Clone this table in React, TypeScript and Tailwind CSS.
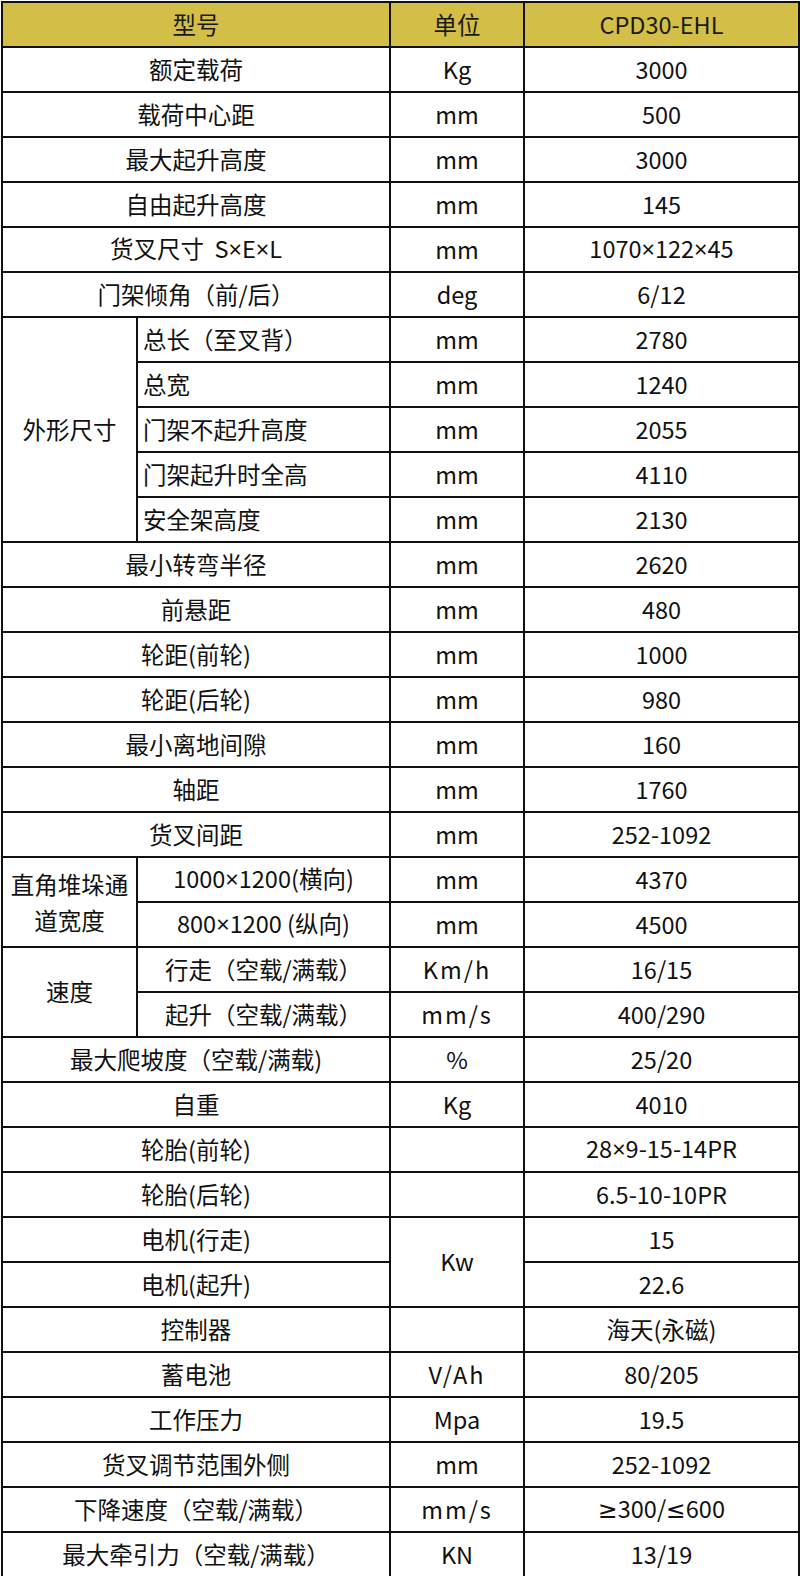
import { Fragment } from 'react'

const font = { fontFamily: '"Noto Sans CJK SC", "Noto Sans", sans-serif' }

type Row = {
  label: string
  unit?: string
  value: string
}

const top: Row[] = [
  { label: '额定载荷', unit: 'Kg', value: '3000' },
  { label: '载荷中心距', unit: 'mm', value: '500' },
  { label: '最大起升高度', unit: 'mm', value: '3000' },
  { label: '自由起升高度', unit: 'mm', value: '145' },
  { label: '货叉尺寸\u00a0 S×E×L', unit: 'mm', value: '1070×122×45' },
  { label: '门架倾角（前/后）', unit: 'deg', value: '6/12' },
]

const shape: Row[] = [
  { label: '总长（至叉背）', unit: 'mm', value: '2780' },
  { label: '总宽', unit: 'mm', value: '1240' },
  { label: '门架不起升高度', unit: 'mm', value: '2055' },
  { label: '门架起升时全高', unit: 'mm', value: '4110' },
  { label: '安全架高度', unit: 'mm', value: '2130' },
]

const middle: Row[] = [
  { label: '最小转弯半径', unit: 'mm', value: '2620' },
  { label: '前悬距', unit: 'mm', value: '480' },
  { label: '轮距(前轮)', unit: 'mm', value: '1000' },
  { label: '轮距(后轮)', unit: 'mm', value: '980' },
  { label: '最小离地间隙', unit: 'mm', value: '160' },
  { label: '轴距', unit: 'mm', value: '1760' },
  { label: '货叉间距', unit: 'mm', value: '252-1092' },
]

const lower: Row[] = [
  { label: '最大爬坡度（空载/满载)', unit: '%', value: '25/20' },
  { label: '自重', unit: 'Kg', value: '4010' },
  { label: '轮胎(前轮)', unit: '', value: '28×9-15-14PR' },
  { label: '轮胎(后轮)', unit: '', value: '6.5-10-10PR' },
]

const tail: Row[] = [
  { label: '控制器', unit: '', value: '海天(永磁)' },
  { label: '蓄电池', unit: 'V/Ah', value: '80/205' },
  { label: '工作压力', unit: 'Mpa', value: '19.5' },
  { label: '货叉调节范围外侧', unit: 'mm', value: '252-1092' },
  { label: '下降速度（空载/满载）', unit: 'mm/s', value: '≥300/≤600' },
  { label: '最大牵引力（空载/满载）', unit: 'KN', value: '13/19' },
]

const td = 'border-2 border-[#111] text-center align-middle p-0'

// × ≥ ≤ come out full width in the CJK face, the picture has the narrow Latin ones
function T({ s }: { s: string }) {
  const parts = s.split(/([×≥≤])/)
  return (
    <>
      {parts.map((p, i) =>
        /[×≥≤]/.test(p) ? (
          <span key={i} style={{ fontFamily: '"Noto Sans", "DejaVu Sans", sans-serif' }}>{p}</span>
        ) : (
          <Fragment key={i}>{p}</Fragment>
        )
      )}
    </>
  )
}

function Unit({ u }: { u?: string }) {
  const spaced = u === 'mm/s' || u === 'Km/h' || u === 'V/Ah'
  return <td className={td}><span className={spaced ? 'tracking-[2px]' : ''}>{u}</span></td>
}

function SimpleRow({ r }: { r: Row }) {
  return (
    <tr className="h-[45px]">
      <td colSpan={2} className={td}><T s={r.label} /></td>
      <Unit u={r.unit} />
      <td className={td}><T s={r.value} /></td>
    </tr>
  )
}

export default function App() {
  return (
    <div className="bg-white w-[800px] h-[1576px] overflow-hidden pl-[1px] pt-[1px]" style={font}>
      <table className="table-fixed border-collapse w-[797px] text-[23.5px] leading-none text-[#111]">
        <colgroup>
          <col className="w-[135px]" />
          <col className="w-[253px]" />
          <col className="w-[134px]" />
          <col className="w-[275px]" />
        </colgroup>
        <tbody>
          <tr className="h-[45px] bg-[#d3be47] text-[#1a1a1a]">
            <td colSpan={2} className={td}>型号</td>
            <td className={td}>单位</td>
            <td className={td}>CPD30-EHL</td>
          </tr>
          {top.map((r) => <SimpleRow key={r.label} r={r} />)}
          {shape.map((r, i) => (
            <tr key={r.label} className="h-[45px]">
              {i === 0 && <td rowSpan={5} className={td}>外形尺寸</td>}
              <td className={`${td} text-left pl-[5px]`}>{r.label}</td>
              <Unit u={r.unit} />
              <td className={td}>{r.value}</td>
            </tr>
          ))}
          {middle.map((r) => <SimpleRow key={r.label} r={r} />)}
          <tr className="h-[45px]">
            <td rowSpan={2} className={`${td} leading-[1.55]`}>直角堆垛通<br />道宽度</td>
            <td className={td}><T s="1000×1200(横向)" /></td>
            <Unit u="mm" />
            <td className={td}>4370</td>
          </tr>
          <tr className="h-[45px]">
            <td className={td}><T s="800×1200 (纵向)" /></td>
            <Unit u="mm" />
            <td className={td}>4500</td>
          </tr>
          <tr className="h-[45px]">
            <td rowSpan={2} className={td}>速度</td>
            <td className={td}>行走（空载/满载）</td>
            <Unit u="Km/h" />
            <td className={td}>16/15</td>
          </tr>
          <tr className="h-[45px]">
            <td className={td}>起升（空载/满载）</td>
            <Unit u="mm/s" />
            <td className={td}>400/290</td>
          </tr>
          {lower.map((r) => <SimpleRow key={r.label} r={r} />)}
          <tr className="h-[45px]">
            <td colSpan={2} className={td}>电机(行走)</td>
            <td rowSpan={2} className={td}>Kw</td>
            <td className={td}>15</td>
          </tr>
          <tr className="h-[45px]">
            <td colSpan={2} className={td}>电机(起升)</td>
            <td className={td}>22.6</td>
          </tr>
          {tail.map((r) => <SimpleRow key={r.label} r={r} />)}
        </tbody>
      </table>
    </div>
  )
}
